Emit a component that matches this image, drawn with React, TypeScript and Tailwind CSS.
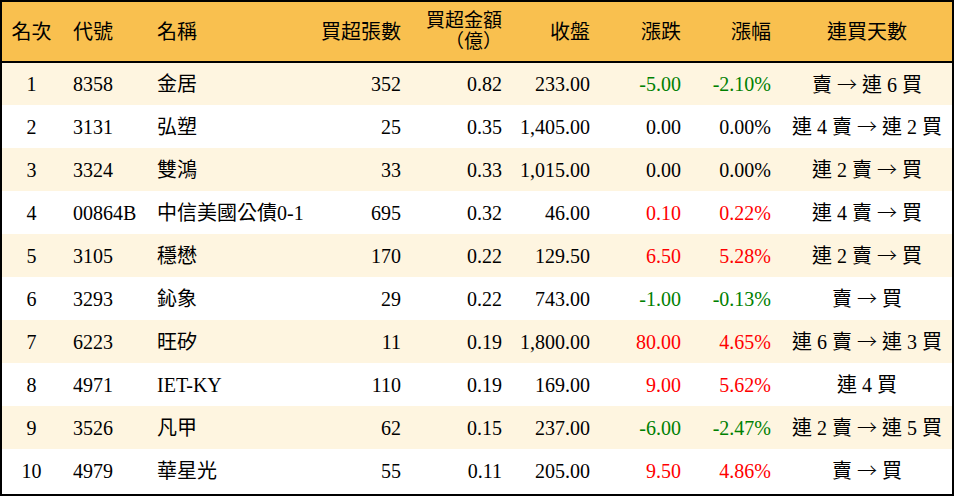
import React from "react"

type Row = {
  rank: number
  code: string
  name: string
  lots: string
  amount: string
  close: string
  change: string
  pct: string
  streak: string
}

const rows: Row[] = [
  { rank: 1, code: "8358", name: "金居", lots: "352", amount: "0.82", close: "233.00", change: "-5.00", pct: "-2.10%", streak: "賣 → 連 6 買" },
  { rank: 2, code: "3131", name: "弘塑", lots: "25", amount: "0.35", close: "1,405.00", change: "0.00", pct: "0.00%", streak: "連 4 賣 → 連 2 買" },
  { rank: 3, code: "3324", name: "雙鴻", lots: "33", amount: "0.33", close: "1,015.00", change: "0.00", pct: "0.00%", streak: "連 2 賣 → 買" },
  { rank: 4, code: "00864B", name: "中信美國公債0-1", lots: "695", amount: "0.32", close: "46.00", change: "0.10", pct: "0.22%", streak: "連 4 賣 → 買" },
  { rank: 5, code: "3105", name: "穩懋", lots: "170", amount: "0.22", close: "129.50", change: "6.50", pct: "5.28%", streak: "連 2 賣 → 買" },
  { rank: 6, code: "3293", name: "鈊象", lots: "29", amount: "0.22", close: "743.00", change: "-1.00", pct: "-0.13%", streak: "賣 → 買" },
  { rank: 7, code: "6223", name: "旺矽", lots: "11", amount: "0.19", close: "1,800.00", change: "80.00", pct: "4.65%", streak: "連 6 賣 → 連 3 買" },
  { rank: 8, code: "4971", name: "IET-KY", lots: "110", amount: "0.19", close: "169.00", change: "9.00", pct: "5.62%", streak: "連 4 買" },
  { rank: 9, code: "3526", name: "凡甲", lots: "62", amount: "0.15", close: "237.00", change: "-6.00", pct: "-2.47%", streak: "連 2 賣 → 連 5 買" },
  { rank: 10, code: "4979", name: "華星光", lots: "55", amount: "0.11", close: "205.00", change: "9.50", pct: "4.86%", streak: "賣 → 買" },
]

function tone(v: string) {
  const n = parseFloat(v)
  if (n > 0) return "text-[#ff0000]"
  if (n < 0) return "text-[#008000]"
  return "text-black"
}

// the arrow in Liberation Serif is tiny, take it from the CJK font
function Streak({ text }: { text: string }) {
  const parts = text.split("→")
  return (
    <>
      {parts.map((p, i) => (
        <React.Fragment key={i}>
          {i > 0 && <span className="font-['Noto_Sans_CJK_TC'] font-light">→</span>}
          {p}
        </React.Fragment>
      ))}
    </>
  )
}

export default function App() {
  return (
    <div
      className="w-[954px] h-[496px] border-2 border-black bg-white text-black text-[20px]"
      style={{ fontFamily: '"Liberation Serif", "Noto Sans CJK TC", serif' }}
    >
      <table className="w-full table-fixed border-collapse">
        <colgroup>
          <col className="w-[59px]" />
          <col className="w-[84px]" />
          <col className="w-[155px]" />
          <col className="w-[112px]" />
          <col className="w-[101px]" />
          <col className="w-[88px]" />
          <col className="w-[91px]" />
          <col className="w-[90px]" />
          <col className="w-[170px]" />
        </colgroup>
        <thead>
          <tr className="h-[60px] bg-[#f9c04f] border-b-2 border-black">
            <th className="font-normal text-center">名次</th>
            <th className="font-normal text-left pl-[12px]">代號</th>
            <th className="font-normal text-left pl-[12px]">名稱</th>
            <th className="font-normal text-right pr-[11px]">買超張數</th>
            <th className="font-normal text-right pr-[11px] text-[19px] leading-[20px]">
              <div>買超金額</div>
              <div className="pt-px">（億）</div>
            </th>
            <th className="font-normal text-right pr-[11px]">收盤</th>
            <th className="font-normal text-right pr-[11px]">漲跌</th>
            <th className="font-normal text-right pr-[11px]">漲幅</th>
            <th className="font-normal text-center">連買天數</th>
          </tr>
        </thead>
        <tbody>
          {rows.map((r) => (
            <tr key={r.rank} className={r.rank % 2 === 1 ? "h-[43px] bg-[#fef5e0]" : "h-[43px] bg-white"}>
              <td className="text-center">{r.rank}</td>
              <td className="text-left pl-[12px]">{r.code}</td>
              <td className="text-left pl-[12px] whitespace-nowrap">{r.name}</td>
              <td className="text-right pr-[11px]">{r.lots}</td>
              <td className="text-right pr-[11px]">{r.amount}</td>
              <td className="text-right pr-[11px]">{r.close}</td>
              <td className={`text-right pr-[11px] ${tone(r.change)}`}>{r.change}</td>
              <td className={`text-right pr-[11px] ${tone(r.pct)}`}>{r.pct}</td>
              <td className="text-center whitespace-nowrap">
                <Streak text={r.streak} />
              </td>
            </tr>
          ))}
        </tbody>
      </table>
    </div>
  )
}
